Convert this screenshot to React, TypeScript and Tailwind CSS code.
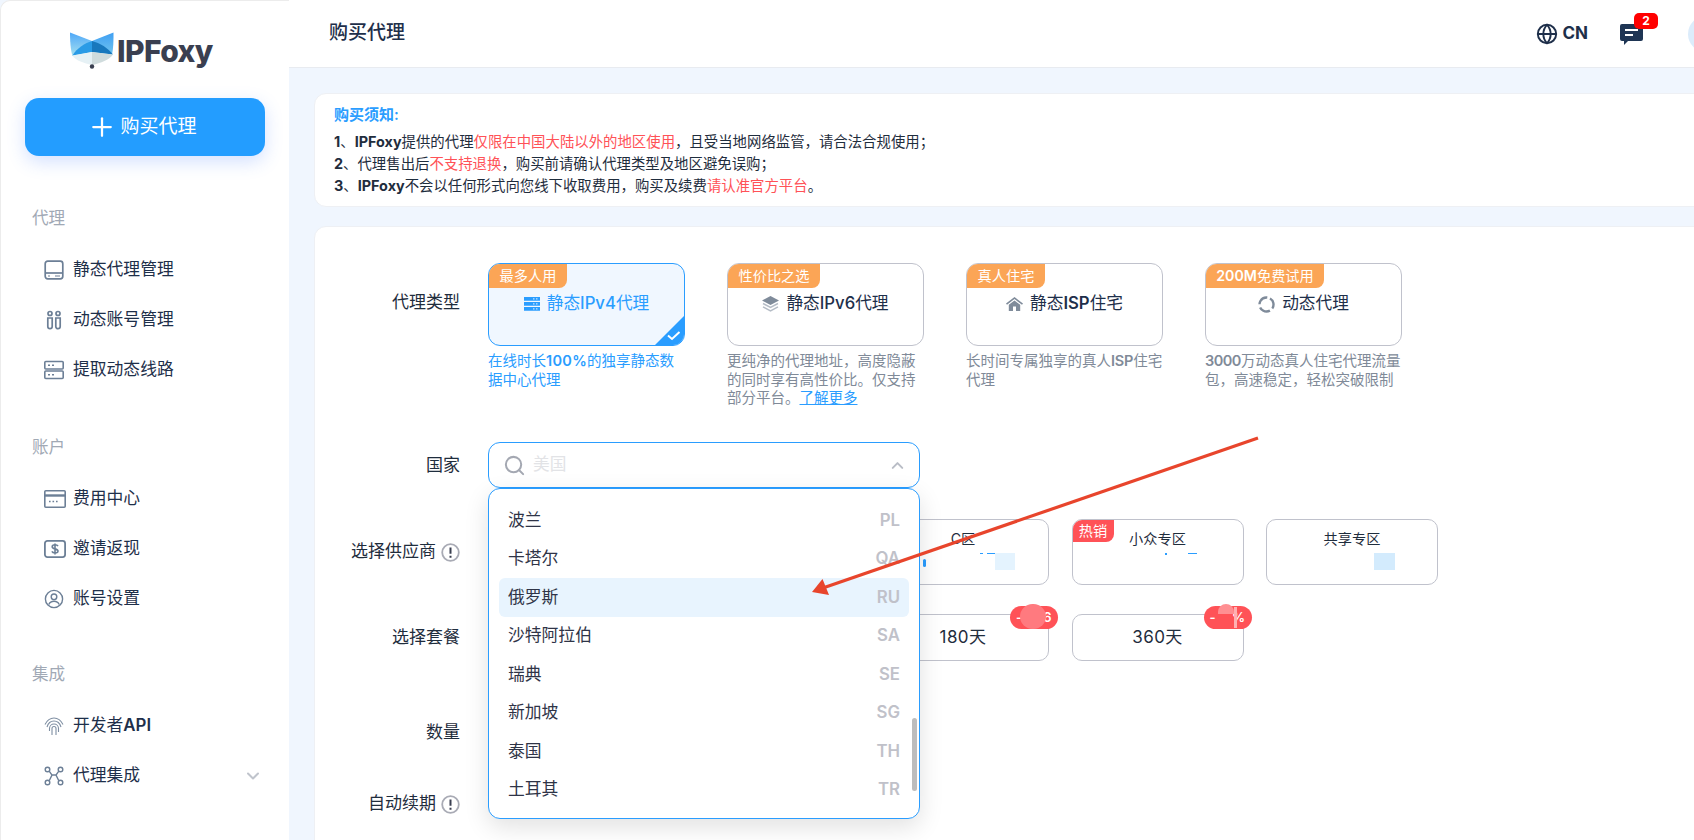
import { ChevronDown, ChevronUp, Globe, Plus, Search } from "lucide-react";

const FONT = "font-['Inter','Noto_Sans_CJK_SC',sans-serif]";

function Drive() {
  return (
    <svg width="20" height="20" viewBox="0 0 20 20" fill="none" stroke="#6c7f96" strokeWidth="1.7">
      <rect x="1.2" y="1.2" width="17.6" height="17.6" rx="2.5" />
      <path d="M1.2 13h17.6" />
      <path d="M4 16h2M11 16h5" strokeWidth="1.2" />
    </svg>
  );
}

function Pills() {
  return (
    <svg width="20" height="20" viewBox="0 0 20 20" fill="none" stroke="#6c7f96" strokeWidth="1.7">
      <circle cx="6" cy="3.5" r="2" />
      <circle cx="14" cy="3.5" r="2" />
      <path d="M3.8 8h4.4v8.5a2.2 2.2 0 0 1-4.4 0zM11.8 8h4.4v8.5a2.2 2.2 0 0 1-4.4 0z" />
    </svg>
  );
}

function Server() {
  return (
    <svg width="20" height="20" viewBox="0 0 20 20" fill="none" stroke="#6c7f96" strokeWidth="1.6">
      <rect x="0.8" y="1.5" width="18.4" height="7.5" rx="1" />
      <rect x="0.8" y="11" width="18.4" height="7.5" rx="1" />
      <path d="M4 5.2h2M8 5.2h2M4 14.8h2M8 14.8h2" />
    </svg>
  );
}

function CardIcon() {
  return (
    <svg width="22" height="18" viewBox="0 0 22 18" fill="none" stroke="#6c7f96" strokeWidth="1.6">
      <rect x="0.8" y="0.8" width="20.4" height="16.4" rx="1" />
      <path d="M0.8 5.5h20.4" strokeWidth="2.4" />
      <path d="M5 11.5h1.6M8.5 11.5h1.6M12 11.5h1.6" />
    </svg>
  );
}

function Dollar() {
  return (
    <svg width="22" height="18" viewBox="0 0 22 18" fill="none" stroke="#6c7f96" strokeWidth="1.8">
      <rect x="0.9" y="0.9" width="20.2" height="16.2" rx="2.5" />
      <path d="M14 6.2c-.5-1-1.6-1.4-3-1.4-1.600 0-2.800.7-2.800 2s1.200 1.700 2.800 2.100 3 .8 3 2.100-1.300 2-3 2c-1.500 0-2.600-.5-3.100-1.600M11 3.500v11" strokeWidth="1.6" />
    </svg>
  );
}

function UserCircle() {
  return (
    <svg width="20" height="20" viewBox="0 0 20 20" fill="none" stroke="#6c7f96" strokeWidth="1.4">
      <circle cx="10" cy="10" r="8.6" />
      <circle cx="10" cy="7.8" r="2.8" />
      <path d="M4.800 15.500c1-2.200 3-3.200 5.200-3.200s4.200 1 5.200 3.200" />
    </svg>
  );
}

function Finger() {
  return (
    <svg width="20" height="20" viewBox="0 0 20 20" fill="none" stroke="#7f8fa3" strokeWidth="1.1">
      <path d="M1 8.500C3 4.500 6.200 2 10 2s7 2.500 9 6.500" />
      <path d="M3 11c1-3.500 3.700-6 7-6s6 2.500 7 6" />
      <path d="M5.500 15v-2.500C5.500 10 7.500 8 10 8s4.500 2 4.500 4.500V16" />
      <path d="M8 19v-6.500a2 2 0 0 1 4 0V19" />
    </svg>
  );
}

function Nodes() {
  return (
    <svg width="20" height="20" viewBox="0 0 20 20" fill="none" stroke="#6c7f96" strokeWidth="1.4">
      <circle cx="3.500" cy="3.500" r="2.300" />
      <circle cx="16.500" cy="3.500" r="2.300" />
      <circle cx="3.500" cy="16.500" r="2.300" />
      <circle cx="16.500" cy="16.500" r="2.300" />
      <path d="M5.200 5.200 8 9 5.200 14.800M14.800 5.200 12 9l2.800 5.800M8 9h4" />
    </svg>
  );
}

function Logo() {
  return (
    <svg width="44" height="37" viewBox="6 6 44 37" className="shrink-0">
      <defs>
        <linearGradient id="ear" x1="0" y1="0" x2="0" y2="1">
          <stop offset="0" stopColor="#4fa8f8" />
          <stop offset="1" stopColor="#a5e0f0" />
        </linearGradient>
        <linearGradient id="earR" x1="0" y1="0" x2="0" y2="1">
          <stop offset="0" stopColor="#3f9ff3" />
          <stop offset="1" stopColor="#70c4ee" />
        </linearGradient>
      </defs>
      <path d="M6 6.500 28 15v11L8.500 30C6.500 24 6 14 6 6.500z" fill="url(#ear)" />
      <path d="M49.500 6.500 28 15v11l20 2.500c1.500-6 1.500-14.500 1.500-22z" fill="url(#earR)" />
      <path d="M8.500 29.500C13 22 21 17 28 15v11z" fill="#2a9be6" />
      <path d="M28 15c8 2 16 7 21 13.500L28 26z" fill="#1878bd" />
      <path d="M8.500 29.500 28 26v13c-8-2-16-4-19.500-9.500z" fill="#e6f1f5" />
      <path d="M49 28.500 28 26v13c9-2 17-5 21-10.500z" fill="#d0dcdd" />
      <circle cx="28" cy="40.500" r="2.200" fill="#3a3f50" />
    </svg>
  );
}

const MENU = [
  {
    title: "代理",
    mt: "mt-[50px]",
    items: [
      { icon: <Drive />, label: <>静态代理管理</> },
      { icon: <Pills />, label: <>动态账号管理</> },
      { icon: <Server />, label: <>提取动态线路</> },
    ],
  },
  {
    title: "账户",
    mt: "mt-[53px]",
    items: [
      { icon: <CardIcon />, label: <>费用中心</> },
      { icon: <Dollar />, label: <>邀请返现</> },
      { icon: <UserCircle />, label: <>账号设置</> },
    ],
  },
  {
    title: "集成",
    mt: "mt-[51px]",
    items: [
      { icon: <Finger />, label: <>开发者<span className="font-semibold">API</span></> },
      { icon: <Nodes />, label: <>代理集成</>, more: true },
    ],
  },
];

function Sidebar() {
  return (
    <aside className="w-[289px] shrink-0 h-full bg-white border-l border-t border-[#ececec] rounded-tl-[10px] flex flex-col">
      <div className="flex items-start pl-[69px] pt-[31px] h-[97px]">
        <Logo />
        <span className="ml-[3px] mt-[1px] text-[30px] leading-[36px] font-extrabold text-[#3a3f50] tracking-[-0.6px]">IPFoxy</span>
      </div>
      <button className="mx-[24px] h-[58px] shrink-0 rounded-[14px] bg-[#239dff] text-white flex items-center justify-center gap-[3px] pr-[6px] text-[19px] shadow-[0_6px_18px_rgba(60,120,255,0.22)]">
        <Plus size={30} strokeWidth={1.8} />
        购买代理
      </button>
      {MENU.map((group) => (
        <div key={group.title} className={group.mt}>
          <div className="pl-[31px] text-[16.6px] leading-[24px] text-[#a1a9b5]">{group.title}</div>
          <div className="mt-[28px] flex flex-col gap-[26px]">
            {group.items.map((item, i) => (
              <div key={i} className="flex items-center h-[24px] pl-[43px] pr-[26px] text-[16.8px] text-[#1e2f4a]">
                <span className="w-[29px] shrink-0 flex">{item.icon}</span>
                {item.label}
                {item.more && <ChevronDown size={20} strokeWidth={2.4} className="ml-auto text-[#c0c4cc]" />}
              </div>
            ))}
          </div>
        </div>
      ))}
    </aside>
  );
}

function Topbar() {
  return (
    <header className="h-[68px] shrink-0 bg-white border-b border-[#e8ebf0] flex items-center pl-[40px] overflow-hidden">
      <h1 className="text-[19px] font-medium text-[#1e2f4a]">购买代理</h1>
      <div className="ml-auto flex items-center text-[#1e2f4a]">
        <Globe size={22} strokeWidth={2.1} />
        <span className="ml-[4px] text-[17px] font-bold">CN</span>
        <div className="relative ml-[32px] mt-[2px]">
          <svg width="23" height="21" viewBox="0 0 23 21" className="block">
            <path d="M2 0h19a2 2 0 0 1 2 2v13a2 2 0 0 1-2 2H8l-4 4v-4H2a2 2 0 0 1-2-2V2a2 2 0 0 1 2-2z" fill="#1e3554" />
            <path d="M5 6h13M5 11h8" stroke="#fff" strokeWidth="1.8" />
          </svg>
          <span className="absolute -top-[11px] left-[14px] w-[24px] h-[16px] rounded-[5px] bg-[#ff0000] text-white text-[12px] leading-[16px] font-bold text-center">2</span>
        </div>
        <div className="ml-[45px] -mr-[30px] w-[36px] h-[36px] rounded-full bg-[#dcecfb]" />
      </div>
    </header>
  );
}

function Notice() {
  return (
    <div className="w-[1500px] h-[114px] bg-white rounded-[12px] border border-[#eef0f4] pl-[19px] pt-[10px] text-[14.4px] leading-[22px] text-[#1f2d3d]">
      <div className="font-semibold text-[15px] text-[#2a9dff] mb-[5px]">购买须知:</div>
      <div>
        <b className="font-bold">1</b>、<b className="font-bold">IPFoxy</b>提供的代理<span className="text-[#ff5257]">仅限在中国大陆以外的地区使用</span>，且受当地网络监管，请合法合规使用；
      </div>
      <div>
        <b className="font-bold">2</b>、代理售出后<span className="text-[#ff5257]">不支持退换</span>，购买前请确认代理类型及地区避免误购；
      </div>
      <div>
        <b className="font-bold">3</b>、<b className="font-bold">IPFoxy</b>不会以任何形式向您线下收取费用，购买及续费<span className="text-[#ff5257]">请认准官方平台</span>。
      </div>
    </div>
  );
}

function Hint() {
  return (
    <svg width="19" height="19" viewBox="0 0 19 19" className="ml-[5px] shrink-0" fill="none">
      <circle cx="9.500" cy="9.500" r="8.300" stroke="#a9abb5" strokeWidth="1.800" />
      <path d="M9.500 4.500v6.200M9.500 12.700v2" stroke="#3a3f50" strokeWidth="2" />
    </svg>
  );
}

function Label({ children, className }: { children: React.ReactNode; className?: string }) {
  return (
    <div className={`w-[125px] mr-[28px] shrink-0 flex items-center justify-end text-[17px] text-[#1f2d3d] whitespace-nowrap ${className ?? ""}`}>
      {children}
    </div>
  );
}

const TYPES = [
  {
    tag: "最多人用",
    tagW: "w-[78px]",
    icon: (
      <svg width="16" height="14" viewBox="0 0 16 14" fill="#2a9dff">
        <path d="M0 0h16v3.800H0zM0 5h16v3.800H0zM0 10h16v3.800H0z" />
        <path d="M9 1.900h1.500M12 1.900h1.500M9 6.900h1.500M12 6.900h1.500M9 11.900h1.500M12 11.900h1.500" stroke="#e8f4ff" strokeWidth="1" />
      </svg>
    ),
    title: <>静态<span className="font-medium">IPv4</span>代理</>,
    desc: <>在线时长<span className="font-semibold tracking-[0.3px]">100%</span>的独享静态数据中心代理</>,
    active: true,
  },
  {
    tag: "性价比之选",
    tagW: "w-[92px]",
    icon: (
      <svg width="17" height="16" viewBox="0 0 17 16">
        <path d="M8.500 0 17 4.500 8.500 9 0 4.500z" fill="#7f8b9a" />
        <path d="M1 7.500 8.500 11.500 16 7.500M1 10.800 8.500 14.800 16 10.800" fill="none" stroke="#b5bcc6" strokeWidth="1.500" />
      </svg>
    ),
    title: <>静态<span className="font-medium">IPv6</span>代理</>,
    desc: <>更纯净的代理地址，高度隐蔽的同时享有高性价比。仅支持部分平台。<span className="text-[#2a9dff] underline">了解更多</span></>,
  },
  {
    tag: "真人住宅",
    tagW: "w-[78px]",
    icon: (
      <svg width="17" height="14" viewBox="0 0 17 14" fill="#7f8b9a">
        <path d="M8.500 0 0 6.500l1 1.200 7.500-5.700L16 7.700l1-1.200z" />
        <path d="M2.800 7.800 8.500 3.500l5.700 4.300V14H10V9.500H7V14H2.800z" />
      </svg>
    ),
    title: <>静态<span className="font-semibold">ISP</span>住宅</>,
    desc: <>长时间专属独享的真人<span className="font-semibold tracking-[-0.2px]">ISP</span>住宅代理</>,
  },
  {
    tag: <><span className="font-semibold">200M</span>免费试用</>,
    tagW: "w-[118px]",
    icon: (
      <svg width="17" height="17" viewBox="0 0 17 17" fill="none" stroke="#7f8b9a" strokeWidth="2.400">
        <circle cx="8.500" cy="8.500" r="7" strokeDasharray="11.500 3.160" transform="rotate(-60 8.500 8.500)" />
      </svg>
    ),
    title: <>动态代理</>,
    desc: <><span className="font-semibold tracking-[-0.5px]">3000</span>万动态真人住宅代理流量包，高速稳定，轻松突破限制</>,
  },
];

function TypeCards() {
  return (
    <div className="grid grid-cols-[repeat(4,197px)] gap-x-[42px]">
      {TYPES.map((t, i) => (
        <div key={i}>
          <div className={`relative h-[83px] rounded-[12px] border overflow-hidden ${t.active ? "border-[#2a9dff] bg-[#f0f7ff]" : "border-[#c0c2cc] bg-white"}`}>
            <div className={`${t.tagW} h-[24px] bg-[#fba556] rounded-br-[8px] text-white text-[14.200px] leading-[24px] text-center`}>{t.tag}</div>
            <div className={`mt-[4px] h-[24px] flex items-center justify-center gap-[7px] text-[16.7px] ${t.active ? "text-[#2a9dff]" : "text-[#1e2f4a]"}`}>
              {t.icon}
              <span>{t.title}</span>
            </div>
            {t.active && (
              <svg width="29" height="29" viewBox="0 0 29 29" className="absolute right-0 bottom-0">
                <path d="M29 0v29H0z" fill="#2a9dff" />
                <path d="M13 19.500l4 3.500 7.500-7" fill="none" stroke="#fff" strokeWidth="2" />
              </svg>
            )}
          </div>
          <p className={`mt-[6px] text-[14.500px] leading-[18.500px] ${t.active ? "text-[#2a9dff]" : "text-[#808a98]"}`}>{t.desc}</p>
        </div>
      ))}
    </div>
  );
}

const COUNTRIES = [
  ["波兰", "PL"],
  ["卡塔尔", "QA"],
  ["俄罗斯", "RU"],
  ["沙特阿拉伯", "SA"],
  ["瑞典", "SE"],
  ["新加坡", "SG"],
  ["泰国", "TH"],
  ["土耳其", "TR"],
];

function CountrySelect() {
  return (
    <div className="relative w-[432px] h-[46px] shrink-0">
      <div className="h-full rounded-[12px] border border-[#2a9dff] bg-white flex items-center pl-[14px] pr-[12px]">
        <Search size={23} className="text-[#a4a8b2] shrink-0" strokeWidth={2.1} />
        <span className="ml-[7px] text-[16.7px] text-[#e2e3e6]">美国</span>
        <ChevronUp size={19} strokeWidth={2.5} className="ml-auto text-[#b9bdc6]" />
      </div>
      <div className="absolute z-10 top-[46px] left-0 w-[432px] h-[331px] rounded-[12px] border border-[#2a9dff] bg-white pt-[12px] px-[10px] overflow-hidden shadow-[0_8px_24px_rgba(0,0,0,0.12)]">
        {COUNTRIES.map(([name, code]) => (
          <div key={code} className={`h-[38.500px] px-[9px] rounded-[6px] flex items-center justify-between text-[16.8px] text-[#2f3447] ${code === "RU" ? "bg-[#e8f4fe]" : ""}`}>
            <span>{name}</span>
            <span className="font-semibold text-[#c0c1c9]">{code}</span>
          </div>
        ))}
        <div className="absolute right-[2px] top-[229px] w-[5px] h-[73px] rounded-full bg-[#bdbdbd]" />
      </div>
    </div>
  );
}

const ZONES = [
  { name: "A区", marks: [] as string[] },
  { name: "B区", marks: [] as string[] },
  {
    name: "C区",
    marks: [
      "left-[117px] w-[20px] top-[33px] h-[17px] bg-[#e4f3fe]",
      "left-[102px] w-[3px] top-[33px] h-[1px] bg-[#2a9dff]",
      "left-[109px] w-[8px] top-[33px] h-[1px] bg-[#2a9dff]",
      "left-[45px] w-[3px] top-[39px] h-[8px] rounded-full bg-[#2a9dff]",
    ],
  },
  {
    name: "小众专区",
    hot: true,
    marks: [
      "left-[92px] w-[2px] top-[33px] h-[2px] bg-[#2a9dff]",
      "left-[115px] w-[9px] top-[33px] h-[1px] bg-[#2a9dff]",
    ],
  },
  { name: "共享专区", marks: ["left-[107px] w-[21px] top-[33px] h-[17px] bg-[#d3ebfd]"] },
];

function Zones() {
  return (
    <div className="grid grid-cols-[repeat(5,172px)] gap-x-[22.500px]">
      {ZONES.map((z) => (
        <div key={z.name} className="relative h-[66px] rounded-[10px] border border-[#c0c2cc] bg-white pt-[8px] text-center text-[14.200px] leading-[22px] text-[#1f2d3d] overflow-hidden">
          {z.hot && (
            <span className="absolute left-0 top-0 w-[41px] h-[22px] rounded-br-[8px] bg-[#ff5257] text-white">热销</span>
          )}
          {z.name}
          {z.marks.map((m) => (
            <span key={m} className={`absolute ${m}`} />
          ))}
        </div>
      ))}
    </div>
  );
}

const PLANS = [
  { name: "30天" },
  { name: "90天" },
  { name: "180天", badge: "a" },
  { name: "360天", badge: "b" },
];

function Plans() {
  return (
    <div className="grid grid-cols-[repeat(4,172px)] gap-x-[22.500px]">
      {PLANS.map((p) => (
        <div key={p.name} className="relative h-[47px] rounded-[10px] border border-[#c0c2cc] bg-white flex items-center justify-center text-[17px] tracking-[0.4px] text-[#1f2d3d]">
          {p.name}
          {p.badge === "a" && (
            <span className="absolute -top-[9px] -right-[10px] w-[48px] h-[23px] rounded-full bg-[#ff5257] text-white text-[13px] font-semibold leading-[23px] flex justify-between px-[6px]">
              <span>-</span>
              <span>6</span>
              <span className="absolute left-[10px] -top-[2px] w-[26px] h-[25px] rounded-full bg-[#ff7a7f]" />
            </span>
          )}
          {p.badge === "b" && (
            <span className="absolute -top-[9px] -right-[9px] w-[48px] h-[23px] rounded-full bg-[#ff5257] text-white text-[13px] font-semibold leading-[23px] flex justify-between px-[6px]">
              <span>-</span>
              <span>%</span>
              <span className="absolute left-[14px] -top-[2px] w-[16px] h-[10px] rounded-t-full bg-[#ff8f92]" />
              <span className="absolute left-[30px] top-[1px] w-[3px] h-[21px] bg-[#ffb0b2]" />
            </span>
          )}
        </div>
      ))}
    </div>
  );
}

function PurchaseForm() {
  return (
    <div className="mt-[19px] w-[1500px] h-[640px] bg-white rounded-[12px] border border-[#eef0f4] pt-[36px] pl-[20px]">
      <div className="flex h-[179px]">
        <Label className="h-[24px] mt-[28px]">代理类型</Label>
        <TypeCards />
      </div>
      <div className="flex h-[46px]">
        <Label className="pt-[1px]">国家</Label>
        <CountrySelect />
      </div>
      <div className="flex h-[66px] mt-[31px]">
        <Label>
          选择供应商
          <Hint />
        </Label>
        <Zones />
      </div>
      <div className="flex h-[47px] mt-[29px]">
        <Label className="pt-[1px]">选择套餐</Label>
        <Plans />
      </div>
      <div className="flex h-[46px] mt-[49px]">
        <Label>数量</Label>
      </div>
      <div className="flex h-[46px] mt-[25px]">
        <Label>
          自动续期
          <Hint />
        </Label>
      </div>
    </div>
  );
}

export default function App() {
  return (
    <div className={`relative w-[1694px] h-[840px] overflow-hidden flex bg-[#f0f6fe] ${FONT}`}>
      <Sidebar />
      <main className="flex-1 min-w-0 h-full flex flex-col">
        <Topbar />
        <div className="pl-[25px] pt-[25px]">
          <Notice />
          <PurchaseForm />
        </div>
      </main>
      {/* annotation arrow drawn on top of the screenshot */}
      <svg width="1694" height="840" className="absolute inset-0 z-20 pointer-events-none">
        <path d="M1258 438 820 589" stroke="#e8452c" strokeWidth="3.200" />
        <path d="M812 592 822.500 579 829 595z" fill="#e8452c" />
      </svg>
    </div>
  );
}
